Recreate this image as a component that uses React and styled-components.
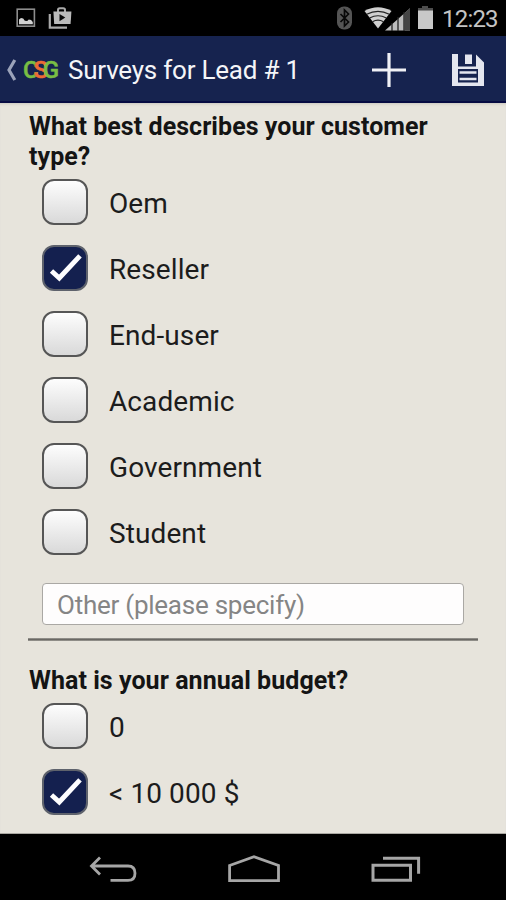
import React, { useState } from 'react';
import styled, { createGlobalStyle } from 'styled-components';

const GlobalStyle = createGlobalStyle`
  * {
    box-sizing: border-box;
  }

  body {
    margin: 0;
    background: #000;
    font-family: Roboto, 'Liberation Sans', sans-serif;
  }
`;

const Screen = styled.div`
  display: flex;
  flex-direction: column;
  width: 506px;
  height: 900px;
  overflow: hidden;
`;

const StatusBar = styled.div`
  display: flex;
  align-items: center;
  justify-content: space-between;
  height: 36px;
  padding: 0 8px 0 16px;
  background: #000;
`;

const StatusGroup = styled.div`
  display: flex;
  align-items: center;
`;

const NotificationIcons = styled(StatusGroup)`
  gap: 12px;
`;

const SystemIcons = styled(StatusGroup)`
  svg + svg {
    margin-left: 10px;
  }

  svg:nth-of-type(3) {
    margin-left: 5px;
  }
`;

const Clock = styled.span`
  width: 56px;
  margin-left: 8px;
  padding-top: 1px;
  color: #c4c4c4;
  font-size: 24px;
  line-height: 36px;
  letter-spacing: -0.8px;
  white-space: nowrap;
`;

const Header = styled.header`
  display: flex;
  align-items: center;
  height: 67px;
  padding: 2px 21px 0 6px;
  background: #16234f;
  border-bottom: 2px solid #060a42;
`;

const Logo = styled.div`
  display: flex;
  width: 36px;
  margin: 0 9px 0 6px;
  font-size: 24px;
  font-weight: 500;
  line-height: 28px;
  letter-spacing: -5.2px;
`;

const LogoLetter = styled.span`
  color: ${(props) => props.$color};
  -webkit-text-stroke: 0.5px ${(props) => props.$color};
`;

const Title = styled.h1`
  flex: 1;
  margin: 0;
  padding-top: 1px;
  color: #f4f5f8;
  font-size: 26px;
  font-weight: 400;
  line-height: 32px;
  letter-spacing: -0.22px;
  white-space: nowrap;
`;

const HeaderButton = styled.button`
  display: flex;
  margin: 0 0 0 ${(props) => props.$gap || '0'};
  padding: 0;
  background: none;
  border: none;
`;

const Content = styled.main`
  flex: 1;
  padding: 9px 28px 0;
  background: #e7e4dc;
  border-bottom: 1px solid #aaa8a2;
  box-shadow: inset 0 3px 3px -2px #c8c5be;
  overflow: hidden;
`;

const Question = styled.h2`
  margin: 0 0 7px 1px;
  color: #141414;
  font-size: 25px;
  font-weight: 700;
  line-height: 30px;
  letter-spacing: 0.05px;
`;

const Options = styled.div`
  display: flex;
  flex-direction: column;
  gap: 20px;
  padding-left: 14px;
`;

const Option = styled.label`
  display: flex;
  align-items: center;
  height: 46px;
`;

const Box = styled.span`
  display: flex;
  align-items: center;
  justify-content: center;
  width: 46px;
  height: 46px;
  border: 2px solid ${(props) => (props.$checked ? '#5e626c' : '#565656')};
  border-radius: 12px;
  background: ${(props) => (props.$checked ? '#14204f' : 'linear-gradient(#fdfdfd, #d9d9d9)')};
`;

const OptionText = styled.span`
  margin-left: 21px;
  padding-top: 4px;
  color: #1c1c1c;
  font-size: 28px;
  line-height: 34px;
  letter-spacing: 0.1px;
  white-space: nowrap;
`;

const OtherInput = styled.input`
  display: block;
  width: 422px;
  height: 42px;
  margin: 28px 0 0 14px;
  padding: 2px 14px 0;
  color: #1c1c1c;
  background: #fefdfd;
  border: 1.5px solid #aaa8a4;
  border-radius: 4px;
  font-family: inherit;
  font-size: 26px;
  letter-spacing: -0.25px;

  &::placeholder {
    color: #858585;
    opacity: 1;
  }
`;

const Divider = styled.hr`
  height: 3px;
  margin: 13px 0 25px;
  border: none;
  background: linear-gradient(#a19f99, #6a6864, #a19f99);
`;

const NavBar = styled.nav`
  display: flex;
  align-items: center;
  justify-content: space-between;
  height: 66px;
  padding: 3px 85px 0 89px;
  background: #000;
`;

const PictureIcon = () => (
  <svg width="20" height="20" viewBox="0 0 20 20">
    <rect x="1.2" y="1.2" width="17.2" height="17" fill="none" stroke="#8d8d8d" strokeWidth="1.6" />
    <path d="M3 16.2v-4.6l2-1.500 2.200.5 1.600 2.200 2.400.1 1.600-1.300 2.300.5 1.700 2v2.100z" fill="#d2d2d2" />
  </svg>
);

const PlayStoreIcon = () => (
  <svg width="24" height="24" viewBox="0 0 24 24">
    <path d="M1.8 8v13.6H19" fill="none" stroke="#aaa" strokeWidth="2.2" />
    <path d="M10 6V4q0-1.8 1.8-1.8h3.4Q17 2.2 17 4v2" fill="none" stroke="#aaa" strokeWidth="2" />
    <path d="M5.4 5.5h18L22.6 18H6.2z" fill="#bababa" />
    <path d="M11.5 8v7.2l5.8-3.6z" fill="#080808" />
  </svg>
);

const BluetoothIcon = () => (
  <svg width="18" height="26" viewBox="0 0 18 26">
    <rect x="1" y="1.5" width="15" height="23" rx="7" fill="#555" />
    <path d="M4.5 9l8 8-4 4V5l4 4-8 8" fill="none" stroke="#080808" strokeWidth="1.7" />
  </svg>
);

const SignalIcon = () => (
  <svg width="48" height="26" viewBox="0 0 48 26">
    <path d="M.5 6Q14 -1.5 27.500 6L14 23.500z" fill="#d0d0d0" />
    <path
      d="M2.700 9.300q11.300-6 22.600 0M5.600 13q8.400-4.500 16.800 0M8.500 16.700q5.500-3 11 0"
      fill="none"
      stroke="#222"
      strokeWidth="1.200"
    />
    <path d="M21 25.500L46 3.200v22.300z" fill="#bdbdbd" />
    <path d="M40.500 8l5.500-4.800v22.300h-5.500z" fill="#454545" />
    <path d="M28 18v8M34 12v14M40 7v19" stroke="#222" strokeWidth="1.300" />
  </svg>
);

const BatteryIcon = () => (
  <svg width="17" height="24" viewBox="0 0 17 24">
    <path d="M5 0h6v2h5v4H1V2h4z" fill="#4d4d4d" />
    <path d="M1 4.500h15V23H1z" fill="#c8c8c8" />
  </svg>
);

const BackChevron = () => (
  <svg width="11" height="22" viewBox="0 0 11 22">
    <path d="M8.800 1L3 11l5.800 10" fill="none" stroke="#9ba3ba" strokeWidth="3.200" />
  </svg>
);

const PlusIcon = () => (
  <svg width="36" height="36" viewBox="0 0 36 36">
    <path d="M18 1v34M1 18h34" stroke="#f0f1f6" strokeWidth="3.200" />
  </svg>
);

const SaveIcon = () => (
  <svg width="34" height="34" viewBox="0 0 34 34">
    <path d="M1 1h6v12.500h18V1.500l8 8v23.500H1z" fill="#e4e6ef" />
    <path d="M14 1.500h7V11h-7z" fill="#e4e6ef" />
    <path d="M7 16h20v13.500H7z" fill="#16234f" />
    <path d="M8.500 19.500h17M8.500 26h17" stroke="#e4e6ef" strokeWidth="2.600" />
  </svg>
);

const CheckIcon = () => (
  <svg width="42" height="42" viewBox="0 0 42 42">
    <path d="M7.500 24l7.800 7L36 8.800" fill="none" stroke="#fdfdff" strokeWidth="4.900" />
  </svg>
);

const BackIcon = () => (
  <svg width="48" height="28" viewBox="0 0 48 28">
    <path
      d="M11 2.500L2.500 11l8.500 8.500M3 11h36q7 0 7 7.200t-7 7.200H21.500"
      fill="none"
      stroke="#a6a6a6"
      strokeWidth="2.800"
    />
  </svg>
);

const HomeIcon = () => (
  <svg width="52" height="28" viewBox="0 0 52 28">
    <path d="M1.600 10.500L26 1.700l24.500 8.800v15.200H1.600z" fill="none" stroke="#a6a6a6" strokeWidth="2.800" />
  </svg>
);

const RecentsIcon = () => (
  <svg width="50" height="27" viewBox="0 0 50 27">
    <path d="M12 3.200h35.600v15.500" fill="none" stroke="#a6a6a6" strokeWidth="3" />
    <path d="M2 10.200h37.500v15H2z" fill="none" stroke="#a6a6a6" strokeWidth="3" />
  </svg>
);

const customerTypes = ['Oem', 'Reseller', 'End-user', 'Academic', 'Government', 'Student'];

const budgets = ['0', '< 10 000 $'];

const OptionList = ({ options, initial }) => {
  const [selected, setSelected] = useState([initial]);

  const toggle = (name) => {
    setSelected(
      selected.includes(name) ? selected.filter((item) => item !== name) : [...selected, name]
    );
  };

  return (
    <Options>
      {options.map((name) => (
        <Option key={name} onClick={() => toggle(name)}>
          <Box $checked={selected.includes(name)}>{selected.includes(name) && <CheckIcon />}</Box>
          <OptionText>{name}</OptionText>
        </Option>
      ))}
    </Options>
  );
};

const App = () => {
  return (
    <Screen>
      <GlobalStyle />
      <StatusBar>
        <NotificationIcons>
          <PictureIcon />
          <PlayStoreIcon />
        </NotificationIcons>
        <SystemIcons>
          <BluetoothIcon />
          <SignalIcon />
          <BatteryIcon />
          <Clock>12:23</Clock>
        </SystemIcons>
      </StatusBar>
      <Header>
        <BackChevron />
        <Logo>
          <LogoLetter $color="#79bd44">C</LogoLetter>
          <LogoLetter $color="#ec6a35">S</LogoLetter>
          <LogoLetter $color="#79bd44">G</LogoLetter>
        </Logo>
        <Title>Surveys for Lead # 1</Title>
        <HeaderButton aria-label="Add">
          <PlusIcon />
        </HeaderButton>
        <HeaderButton aria-label="Save" $gap="44px">
          <SaveIcon />
        </HeaderButton>
      </Header>
      <Content>
        <Question>What best describes your customer type?</Question>
        <OptionList options={customerTypes} initial="Reseller" />
        <OtherInput placeholder="Other (please specify)" />
        <Divider />
        <Question>What is your annual budget?</Question>
        <OptionList options={budgets} initial="< 10 000 $" />
      </Content>
      <NavBar>
        <BackIcon />
        <HomeIcon />
        <RecentsIcon />
      </NavBar>
    </Screen>
  );
};

export default App;
